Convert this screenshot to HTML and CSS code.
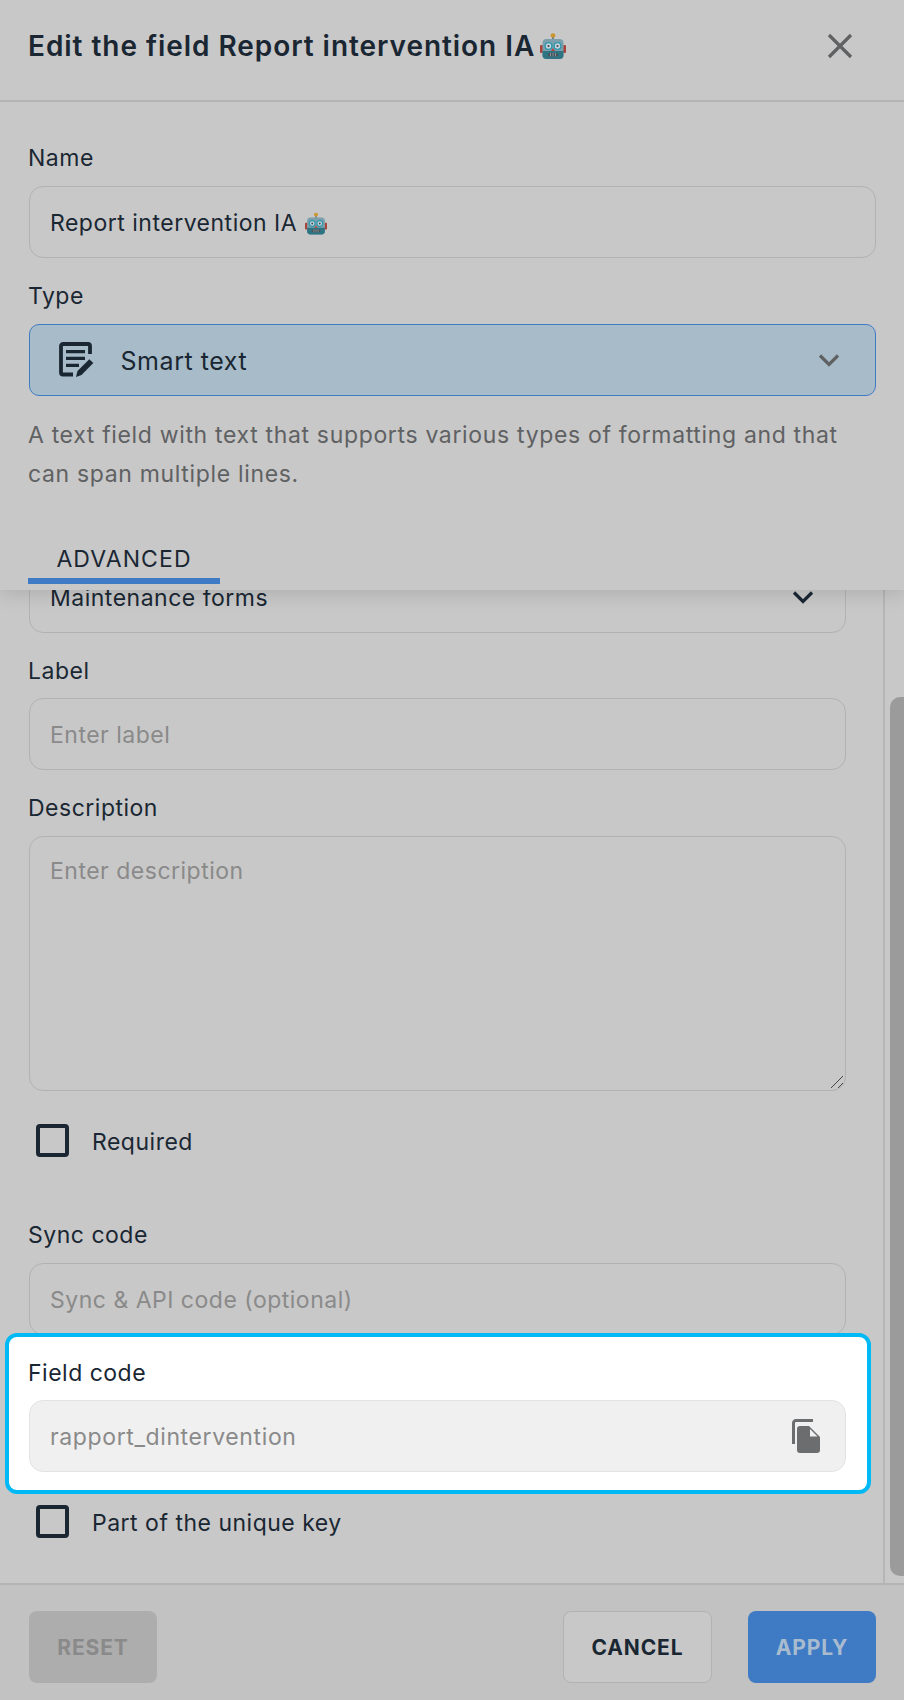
FILE: index.html
```html
<!DOCTYPE html>
<html lang="en">
<head>
<meta charset="utf-8">
<title>Edit the field</title>
<link rel="stylesheet" href="styles.css">
</head>
<body>
<svg class="defs" width="0" height="0" aria-hidden="true">
  <symbol id="robot" viewBox="0 0 26 26">
    <rect x="0" y="12" width="3" height="8" rx="1" fill="#a8433c"/>
    <rect x="23" y="12" width="3" height="8" rx="1" fill="#a8433c"/>
    <rect x="12" y="3" width="2" height="4" fill="#6d7f8a"/>
    <ellipse cx="13" cy="2.400" rx="2.400" ry="2.200" fill="#c9962f"/>
    <rect x="2.500" y="6" width="21" height="20" rx="4" fill="#7ba0ab"/>
    <path d="M2.500 18h21v4a4 4 0 0 1-4 4h-13a4 4 0 0 1-4-4z" fill="#2f7482"/>
    <circle cx="8.500" cy="13" r="3.400" fill="#c4d4d8" stroke="#2f97ad" stroke-width="1.400"/>
    <circle cx="17.500" cy="13" r="3.400" fill="#c4d4d8" stroke="#2f97ad" stroke-width="1.400"/>
    <circle cx="8.500" cy="13" r="1.100" fill="#3a4a55"/>
    <circle cx="17.500" cy="13" r="1.100" fill="#3a4a55"/>
    <path d="M13 15l2 3h-4z" fill="#b5463f"/>
    <rect x="8" y="20" width="10" height="3.400" rx="1" fill="#46525a"/>
    <path d="M10.500 20v3.400M13 20v3.400M15.500 20v3.400" stroke="#a9b5b8" stroke-width=".7"/>
  </symbol>
  <symbol id="chev" viewBox="0 0 22 15">
    <path d="M2 2.500l9 9 9-9" fill="none" stroke="currentColor" stroke-width="3.200"/>
  </symbol>
</svg>

<div class="dialog">
  <div class="top">
    <header class="head">
      <h1 class="title">Edit the field Report intervention IA <svg class="robot-lg"><use href="#robot"/></svg></h1>
      <svg class="close" viewBox="0 0 26 26" aria-label="Close"><path d="M2 2l22 22M24 2L2 24" fill="none" stroke="currentColor" stroke-width="3.200"/></svg>
    </header>
    <div class="basics">
      <label class="lab lab-name">Name</label>
      <div class="input val">Report intervention IA <svg class="robot-sm"><use href="#robot"/></svg></div>
      <label class="lab lab-type">Type</label>
      <div class="input selected">
        <svg class="type-icon" viewBox="0 0 35 36">
          <path d="M31 12V4a2 2 0 0 0-2-2H4a2 2 0 0 0-2 2v26.500a2 2 0 0 0 2 2h10" fill="none" stroke="currentColor" stroke-width="3.800"/>
          <path d="M7 8h19v3.300H7zM7 14.700h19V18H7zM7 21.700h13V25H7z" fill="currentColor"/>
          <path d="M17 35l1.500-6L30.300 17.300l4 3.700L22.500 33z" fill="currentColor"/>
        </svg>
        <span class="sel-text">Smart text</span>
        <svg class="chev chev-grey"><use href="#chev"/></svg>
      </div>
      <p class="help">A text field with text that supports various types of formatting and that can span multiple lines.</p>
      <div class="tabs"><span class="tab">ADVANCED</span></div>
    </div>
  </div>

  <div class="scroll">
    <div class="content">
      <div class="input val cut">Maintenance forms<svg class="chev chev-dark"><use href="#chev"/></svg></div>
      <label class="lab lab-field">Label</label>
      <div class="input ph">Enter label</div>
      <label class="lab lab-desc">Description</label>
      <div class="input ph area">Enter description
        <svg class="grip" viewBox="0 0 14 14"><path d="M1 13L13 1M8 13l5-5" fill="none" stroke="#444" stroke-width="1"/></svg>
      </div>
      <div class="check check-req"><span class="box"></span><span class="check-text">Required</span></div>
      <label class="lab lab-sync">Sync code</label>
      <div class="input ph">Sync &amp; API code (optional)</div>
      <div class="spot">
        <label class="lab lab-spot">Field code</label>
        <div class="input code">rapport_dintervention
          <svg class="copy" viewBox="0 0 28 34">
            <path d="M1.500 25V4A2.500 2.500 0 0 1 4 1.500h17" fill="none" stroke="#6b6d6e" stroke-width="3"/>
            <path d="M8 7h9l11 11v13a3 3 0 0 1-3 3H8a3 3 0 0 1-3-3V10a3 3 0 0 1 3-3z" fill="#6b6d6e"/>
            <path d="M18 10v7.500h7.500z" fill="#f0f0f0"/>
          </svg>
        </div>
      </div>
      <div class="check check-key"><span class="box"></span><span class="check-text">Part of the unique key</span></div>
    </div>
    <div class="track"><div class="thumb"></div></div>
  </div>

  <footer class="foot">
    <button class="btn reset">RESET</button>
    <button class="btn cancel">CANCEL</button>
    <button class="btn apply">APPLY</button>
  </footer>
</div>
</body>
</html>
```

FILE: styles.css
```css
* { box-sizing: border-box; }
html, body { margin: 0; padding: 0; }
body {
  width: 904px;
  height: 1700px;
  overflow: hidden;
  background: #c8c8c8;
  font-family: Inter, "Liberation Sans", sans-serif;
  color: #1a2733;
  font-size: 23px;
  letter-spacing: 0.5px;
}
.defs { position: absolute; }
.dialog { height: 1700px; display: flex; flex-direction: column; }

.top {
  height: 590px;
  flex: none;
  position: relative;
  z-index: 2;
  background: #c8c8c8;
  box-shadow: 0 4px 18px rgba(0, 0, 0, 0.13);
}
.head {
  height: 102px;
  border-bottom: 2px solid #b4b4b4;
  padding: 0 51px 9px 28px;
  display: flex;
  align-items: center;
  justify-content: space-between;
}
.title { margin: 0; font-size: 28px; font-weight: 600; letter-spacing: 0.95px; display: flex; align-items: center; gap: 5px; }
.robot-lg { width: 26px; height: 26px; }
.robot-sm { width: 22px; height: 23px; margin-left: 8px; }
.close { width: 26px; height: 26px; color: #5f6163; }

.basics { padding: 0 28px 0 29px; }
.lab { display: block; line-height: 28px; margin-left: -1px; }
.lab-name { margin-top: 42px; margin-bottom: 14px; }
.lab-type { margin-top: 24px; margin-bottom: 14px; }

.input {
  height: 72px;
  border: 1px solid #b2b2b2;
  border-radius: 14px;
  padding: 2px 20px 0;
  display: flex;
  align-items: center;
  position: relative;
}
.ph { color: #8a8a8a; }
.selected {
  background: #a8bbc9;
  border: 1.500px solid #3f7bc4;
  border-radius: 10px;
  padding-left: 28.500px;
  padding-top: 0;
}
.type-icon { width: 35px; height: 36px; flex: none; color: #1a2733; }
.sel-text { margin-left: 27px; flex: 1; font-size: 25px; letter-spacing: 0.55px; padding-top: 2px; }
.chev { width: 22px; height: 15px; flex: none; }
.chev-grey { color: #5f6163; margin-right: 15px; }
.chev-dark { color: #1a2733; margin-left: auto; margin-right: 11px; margin-top: -2px; }

.help { margin: 20px 0 0 -1px; line-height: 39px; color: #5f6163; letter-spacing: 0.66px; }
.tabs { margin-top: 46px; margin-left: -1px; }
.tab {
  display: inline-block;
  width: 192px;
  text-align: center;
  height: 44px;
  line-height: 38px;
  border-bottom: 6px solid #3f7bc4;
  letter-spacing: 1.1px;
}

.scroll { flex: 1; display: flex; overflow: hidden; min-height: 0; }
.content { width: 885px; flex: none; padding: 0 37px 0 29px; border-right: 2px solid #b6b6b6; }
.cut { margin-top: -29px; }
.lab-field { margin-top: 24px; margin-bottom: 13px; }
.lab-desc { margin-top: 24px; margin-bottom: 14px; }
.area { height: 255px; align-items: flex-start; padding-top: 20px; line-height: 28px; }
.grip { position: absolute; right: 1px; bottom: 1px; width: 14px; height: 14px; }

.check { display: flex; align-items: center; padding-left: 7px; }
.check-text { padding-top: 2px; }
.box {
  width: 33px;
  height: 33px;
  border: 4px solid #1a2733;
  border-radius: 4px;
  margin-right: 23px;
  flex: none;
}
.check-req { margin-top: 33px; }
.lab-sync { margin-top: 64px; margin-bottom: 14px; }

.spot {
  margin: -2px -25px 0 -24px;
  padding: 22px 21px 0 20px;
  height: 161px;
  background: #fff;
  border: 4px solid #00b9f5;
  border-radius: 12px;
  position: relative;
  z-index: 1;
}
.lab-spot { margin-bottom: 13px; }
.code { background: #f0f0f0; border-color: #e3e3e3; color: #8a8a8a; letter-spacing: 0.62px; }
.copy { width: 28px; height: 34px; margin: -2px 5px 0 auto; }
.check-key { margin-top: 11px; }

.track { flex: 1; position: relative; }
.thumb {
  position: absolute;
  left: 5px;
  right: -10px;
  top: 107px;
  bottom: 7px;
  background: #9b9b9b;
  border-radius: 10px;
}

.foot {
  height: 117px;
  flex: none;
  background: #c2c2c2;
  border-top: 2px solid #b4b4b4;
  padding: 26px 28px 0 29px;
  display: flex;
  align-items: flex-start;
  gap: 36px;
}
.btn {
  height: 72px;
  border-radius: 8px;
  font-family: inherit;
  font-size: 21px;
  font-weight: 700;
  letter-spacing: 0.85px;
  border: 1px solid transparent;
}
.reset { width: 128px; background: #adadad; color: #8a8a8a; margin-right: auto; }
.cancel { width: 149px; background: #c8c8c8; color: #1a2733; border-color: #b2b2b2; }
.apply { width: 128px; background: #3f7bc4; color: #a9bccf; }
```
